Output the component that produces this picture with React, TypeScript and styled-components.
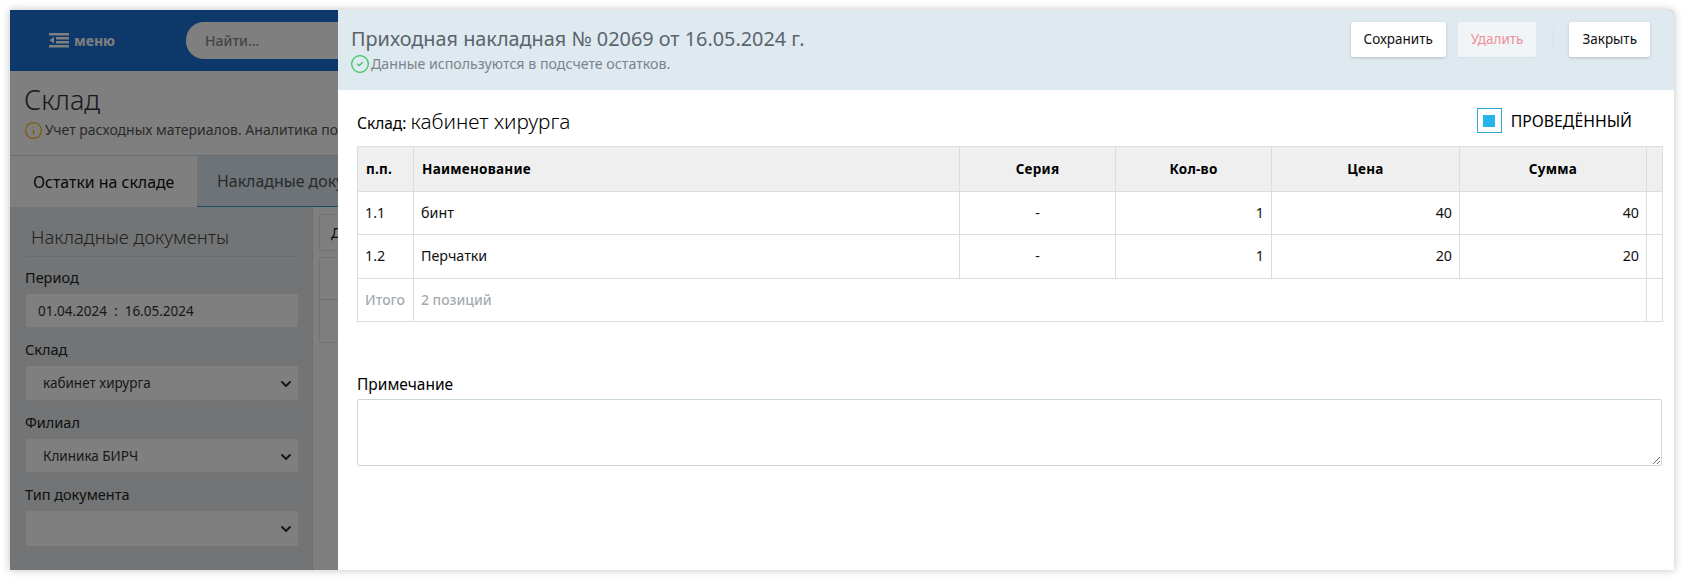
import styled, { createGlobalStyle } from "styled-components";
import { CircleCheck, ChevronDown, Info } from "lucide-react";

const GlobalStyle = createGlobalStyle`
  html, body {
    margin: 0;
    background: #fff;
    font-family: "Noto Sans", "Open Sans", sans-serif;
  }
  * { box-sizing: border-box; }
`;

const Screen = styled.div`
  width: 1684px;
  height: 580px;
  padding: 10px;
  overflow: hidden;
`;

const Window = styled.div`
  position: relative;
  width: 1664px;
  height: 560px;
  overflow: hidden;
  border-top-right-radius: 5px;
  background: #fff;
  box-shadow: 0 0 8px rgba(0, 0, 0, 0.25);
`;

// page behind the drawer
const TopBar = styled.div`
  height: 61px;
  background: #1a70d4;
  display: flex;
  align-items: center;
  padding-left: 39px;
`;

const MenuButton = styled.div`
  width: 137px;
  display: flex;
  align-items: center;
  gap: 5px;
  color: #fff;
  font-size: 14px;
  font-weight: 700;
`;

const Search = styled.div`
  width: 300px;
  height: 37px;
  border-radius: 18px;
  background: #fff;
  color: #888;
  font-size: 14px;
  font-weight: 500;
  padding-left: 19px;
  display: flex;
  align-items: center;
`;

const Heading = styled.div`
  padding: 11px 0 0 14px;
  height: 84px;
  white-space: nowrap;
`;

const PageTitle = styled.div`
  font-size: 27px;
  font-weight: 300;
  line-height: 36px;
  color: #333;
`;

const PageHint = styled.div`
  display: flex;
  align-items: center;
  gap: 2px;
  font-size: 14px;
  line-height: 20px;
  margin-top: 2px;
  color: #555;

  svg {
    color: #f2b90f;
  }
`;

const Tabs = styled.div`
  display: flex;
  height: 52px;
  border-top: 1px solid #d8d8d8;
  padding-left: 2px;
`;

const Tab = styled.div<{ $active?: boolean }>`
  width: ${(p) => (p.$active ? "185px" : "400px")};
  display: flex;
  align-items: center;
  padding-left: ${(p) => (p.$active ? "21px" : "20px")};
  font-size: 15.9px;
  white-space: nowrap;
  color: ${(p) => (p.$active ? "#111" : "#555")};
  background: ${(p) => (p.$active ? "#fff" : "#dae6ee")};
  border-bottom: ${(p) => (p.$active ? "0" : "1px solid #2b9fd0")};
`;

const Body = styled.div`
  display: flex;
  height: 363px;
`;

const Sidebar = styled.div`
  width: 303px;
  height: 100%;
  background: #e4e9eb;
  padding: 0 14px 0 15px;
  border-right: 1px solid #dcdfe1;
`;

const SidebarTitle = styled.div`
  height: 50px;
  padding: 16px 6px 0;
  border-bottom: 1px solid #d4dadd;
  font-size: 18.5px;
  font-weight: 300;
  line-height: 28px;
  color: #444;
  white-space: nowrap;
`;

const FieldLabel = styled.div`
  font-size: 14.5px;
  line-height: 20px;
  color: #222;
  margin: 11px 0 6px;
`;

const FirstLabel = styled(FieldLabel)`
  margin-top: 10px;
`;

const Field = styled.div<{ $tall?: boolean; $height?: number }>`
  position: relative;
  height: ${(p) => p.$height || 35}px;
  width: 274px;
  background: #fff;
  border: 1px solid #e8e8e8;
  border-radius: 2px;
  display: flex;
  align-items: center;
  padding-left: ${(p) => (p.$tall ? "17px" : "12px")};
  font-size: 13.5px;
  white-space: pre;
  color: #333;

  svg {
    position: absolute;
    right: 4px;
    top: 10px;
  }
`;

const Results = styled.div`
  padding: 7px 0 0 6px;
  display: flex;
  flex-direction: column;
  gap: 6px;
`;

const ResultBox = styled.div`
  width: 300px;
  height: 37px;
  background: #fff;
  border: 1px solid #e4e4e4;
  border-radius: 2px;
  padding: 7px 11px;
  font-size: 15px;
  color: #222;
`;

const ResultRows = styled.div`
  width: 300px;
  background: #fff;
  border: 1px solid #e4e4e4;
  border-radius: 2px;
`;

const ResultRow = styled.div`
  height: 42px;
  border-bottom: 1px solid #ddd;

  &:last-child {
    border-bottom: 0;
  }
`;

const Backdrop = styled.div`
  position: absolute;
  inset: 0;
  background: rgba(0, 0, 0, 0.5);
`;

// drawer
const Drawer = styled.div`
  position: absolute;
  top: 0;
  right: 0;
  bottom: 0;
  width: 1336px;
  background: #fff;
  color: #000;
`;

const DrawerHead = styled.div`
  height: 80px;
  background: #dfe9f0;
  display: flex;
  justify-content: space-between;
  padding: 12px 24px 0 13px;
`;

const DocTitle = styled.div`
  font-size: 19.85px;
  line-height: 27px;
  color: #5b646c;
  margin-top: 3px;
`;

const DocStatus = styled.div`
  display: flex;
  align-items: center;
  gap: 1px;
  font-size: 14.2px;
  line-height: 20px;
  margin-top: 2px;
  margin-left: -1px;
  color: #7b848c;

  svg {
    color: #2fc45c;
  }
`;

const Actions = styled.div`
  display: flex;
  align-items: flex-start;
`;

const Button = styled.button<{ $disabled?: boolean }>`
  height: 35px;
  padding: 0 13px 2px;
  border: 0;
  border-radius: 2px;
  font: inherit;
  font-size: 13.5px;
  color: ${(p) => (p.$disabled ? "#ef8f96" : "#111")};
  background: ${(p) => (p.$disabled ? "#f1f5f8" : "#fff")};
  box-shadow: ${(p) => (p.$disabled ? "0 1px 1px rgba(0,0,0,.04)" : "0 1px 3px rgba(0,0,0,.18)")};
`;

const Divider = styled.div`
  width: 1px;
  height: 22px;
  margin: 5px 15px 0 17px;
  background: #d6e0e7;
`;

const SaveButton = styled(Button)`
  margin-right: 12px;
`;

const Content = styled.div`
  padding: 0 12px 0 19px;
`;

const StoreRow = styled.div`
  height: 56px;
  display: flex;
  align-items: center;
  justify-content: space-between;
  padding-right: 30px;
  padding-top: 5px;
`;

const StoreName = styled.div`
  font-size: 15.5px;

  span {
    font-size: 20.8px;
    font-weight: 300;
  }
`;

const Posted = styled.div`
  display: flex;
  align-items: center;
  gap: 9px;
  font-size: 15.8px;
`;

const CheckBox = styled.div`
  width: 25px;
  height: 25px;
  border: 1px solid #2ea8d8;
  display: flex;
  align-items: center;
  justify-content: center;

  &::before {
    content: "";
    width: 12px;
    height: 12px;
    background: #22b5e6;
  }
`;

const Table = styled.table`
  width: 1305px;
  table-layout: fixed;
  border-collapse: collapse;
  font-size: 14.3px;

  tbody tr:nth-child(2) td {
    height: 44px;
  }
`;

const Th = styled.th<{ $left?: boolean }>`
  height: 45px;
  padding: 0 8px;
  background: #efefef;
  border: 1px solid #ddd;
  font-size: 13.5px;
  font-weight: 700;
  letter-spacing: 0.25px;
  text-align: ${(p) => (p.$left ? "left" : "center")};
`;

const Td = styled.td<{ $align?: string; $muted?: boolean }>`
  height: 43px;
  padding: 0 7px 2px;
  border: 1px solid #ddd;
  white-space: nowrap;
  text-align: ${(p) => p.$align || "left"};
  color: ${(p) => (p.$muted ? "#a5abb0" : "#111")};
  font-size: ${(p) => (p.$muted ? "13.9px" : "14.3px")};
  font-weight: ${(p) => (p.$muted ? 500 : 400)};
`;

const NoteLabel = styled.div`
  margin-top: 52px;
  font-size: 15.5px;
  line-height: 20px;
`;

const NoteArea = styled.textarea`
  display: block;
  width: 1305px;
  height: 67px;
  margin-top: 5px;
  border: 1px solid #ccd8d8;
  border-radius: 2px;
  outline: none;
`;

const MenuIcon = () => (
  <svg width="20" height="15" viewBox="0 0 20 15" fill="currentColor">
    <rect x="0" y="0" width="20" height="2.5" />
    <rect x="7" y="4" width="13" height="2.5" />
    <rect x="7" y="8" width="13" height="2.5" />
    <rect x="0" y="12" width="20" height="2.5" />
    <path d="M5 3.8 L0.5 7.2 L5 10.6 Z" />
  </svg>
);

const columns = [56, 546, 156, 156, 188, 187, 16];

const rows = [
  { n: "1.1", name: "бинт", qty: "1", price: "40", sum: "40" },
  { n: "1.2", name: "Перчатки", qty: "1", price: "20", sum: "20" },
];

export default function App() {
  return (
    <>
      <GlobalStyle />
      <Screen>
        <Window>
          <TopBar>
            <MenuButton>
              <MenuIcon />
              меню
            </MenuButton>
            <Search>Найти...</Search>
          </TopBar>
          <Heading>
            <PageTitle>Склад</PageTitle>
            <PageHint>
              <Info size={19} strokeWidth={1.6} />
              Учет расходных материалов. Аналитика по
            </PageHint>
          </Heading>
          <Tabs>
            <Tab $active>Остатки на складе</Tab>
            <Tab>Накладные документы</Tab>
          </Tabs>
          <Body>
            <Sidebar>
              <SidebarTitle>Накладные документы</SidebarTitle>
              <FirstLabel>Период</FirstLabel>
              <Field>01.04.2024  :  16.05.2024</Field>
              <FieldLabel>Склад</FieldLabel>
              <Field $tall $height={36}>
                кабинет хирурга
                <ChevronDown size={16} strokeWidth={3} />
              </Field>
              <FieldLabel>Филиал</FieldLabel>
              <Field $tall>
                Клиника БИРЧ
                <ChevronDown size={16} strokeWidth={3} />
              </Field>
              <FieldLabel>Тип документа</FieldLabel>
              <Field $tall $height={37}>
                <ChevronDown size={16} strokeWidth={3} />
              </Field>
            </Sidebar>
            <Results>
              <ResultBox>Документ</ResultBox>
              <ResultRows>
                <ResultRow />
                <ResultRow />
              </ResultRows>
            </Results>
          </Body>
          <Backdrop />
          <Drawer>
            <DrawerHead>
              <div>
                <DocTitle>Приходная накладная № 02069 от 16.05.2024 г.</DocTitle>
                <DocStatus>
                  <CircleCheck size={20} strokeWidth={1.5} />
                  Данные используются в подсчете остатков.
                </DocStatus>
              </div>
              <Actions>
                <SaveButton>Сохранить</SaveButton>
                <Button $disabled>Удалить</Button>
                <Divider />
                <Button>Закрыть</Button>
              </Actions>
            </DrawerHead>
            <Content>
              <StoreRow>
                <StoreName>
                  Склад: <span>кабинет хирурга</span>
                </StoreName>
                <Posted>
                  <CheckBox />
                  ПРОВЕДЁННЫЙ
                </Posted>
              </StoreRow>
              <Table>
                <colgroup>
                  {columns.map((w, i) => (
                    <col key={i} width={w} />
                  ))}
                </colgroup>
                <thead>
                  <tr>
                    <Th $left>п.п.</Th>
                    <Th $left>Наименование</Th>
                    <Th>Серия</Th>
                    <Th>Кол-во</Th>
                    <Th>Цена</Th>
                    <Th>Сумма</Th>
                    <Th />
                  </tr>
                </thead>
                <tbody>
                  {rows.map((r) => (
                    <tr key={r.n}>
                      <Td>{r.n}</Td>
                      <Td>{r.name}</Td>
                      <Td $align="center">-</Td>
                      <Td $align="right">{r.qty}</Td>
                      <Td $align="right">{r.price}</Td>
                      <Td $align="right">{r.sum}</Td>
                      <Td />
                    </tr>
                  ))}
                  <tr>
                    <Td $muted>Итого</Td>
                    <Td $muted colSpan={5}>
                      2 позиций
                    </Td>
                    <Td />
                  </tr>
                </tbody>
              </Table>
              <NoteLabel>Примечание</NoteLabel>
              <NoteArea />
            </Content>
          </Drawer>
        </Window>
      </Screen>
    </>
  );
}
